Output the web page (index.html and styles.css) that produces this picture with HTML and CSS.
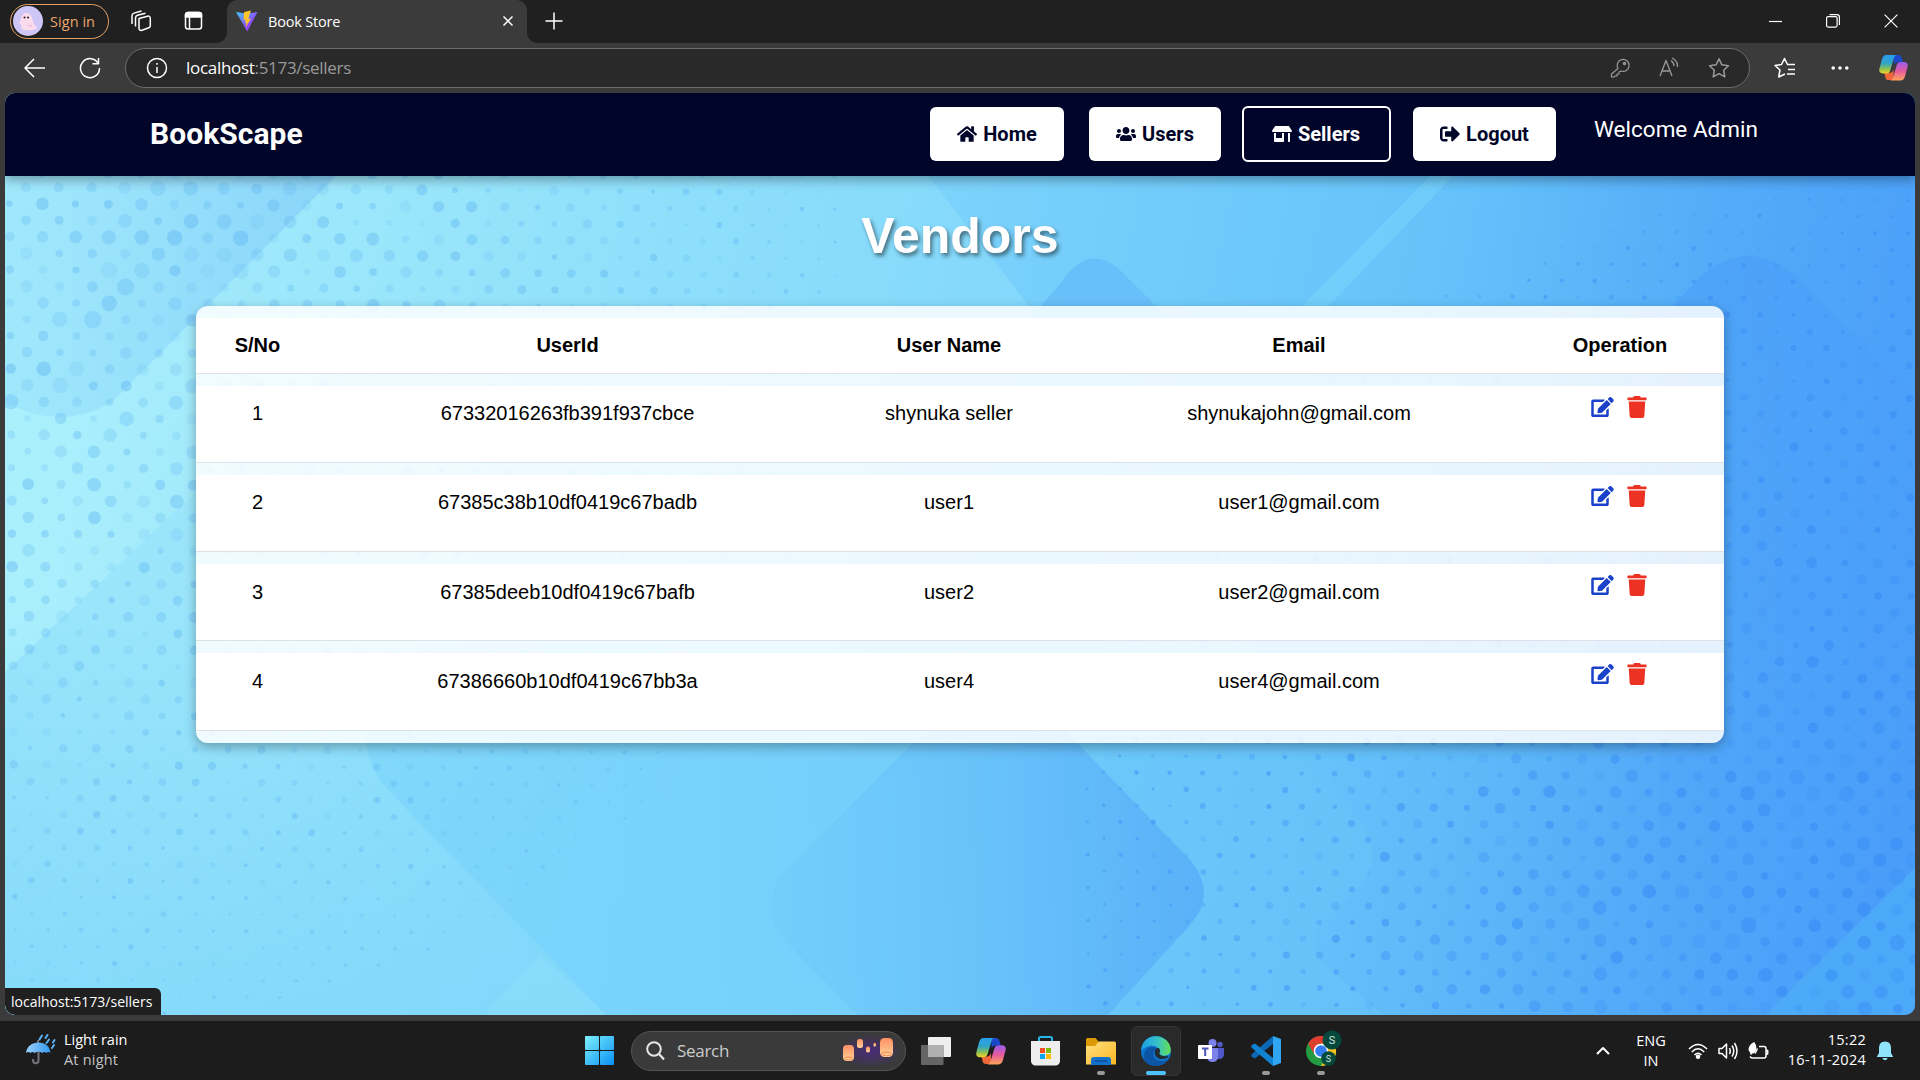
FILE: index.html
```html
<!DOCTYPE html>
<html lang="en">
<head>
<meta charset="utf-8">
<title>Book Store</title>
<link rel="stylesheet" href="styles.css">
</head>
<body>
<svg class="defs" width="0" height="0" aria-hidden="true">
  <defs>
    <linearGradient id="cpA" x1="0" y1="0" x2="0" y2="1"><stop offset="0" stop-color="#2b9df0"/><stop offset=".45" stop-color="#2fa5c8"/><stop offset=".75" stop-color="#8cc152"/><stop offset="1" stop-color="#f5d327"/></linearGradient>
    <linearGradient id="cpB" x1="0" y1="0" x2="0" y2="1"><stop offset="0" stop-color="#9a5cf0"/><stop offset=".5" stop-color="#e65a9c"/><stop offset="1" stop-color="#ffa45c"/></linearGradient>
    <linearGradient id="edA" x1="0" y1="0" x2="1" y2="0"><stop offset="0" stop-color="#1b9de2"/><stop offset=".55" stop-color="#35c1c9"/><stop offset="1" stop-color="#66e04f"/></linearGradient>
    <linearGradient id="fold" x1="0" y1="0" x2="1" y2="1"><stop offset="0" stop-color="#ffe082"/><stop offset="1" stop-color="#fbb820"/></linearGradient>
    <linearGradient id="win" gradientUnits="userSpaceOnUse" x1="0" y1="0" x2="29" y2="29"><stop offset="0" stop-color="#7df0fd"/><stop offset="1" stop-color="#0a90f4"/></linearGradient>
    <linearGradient id="lamp" x1="0" y1="0" x2="0" y2="1"><stop offset="0" stop-color="#ff9063"/><stop offset="1" stop-color="#ffd49a"/></linearGradient>
    <radialGradient id="glow"><stop offset="0" stop-color="#4a2c7c"/><stop offset="1" stop-color="#4a2c7c" stop-opacity="0"/></radialGradient>
    <linearGradient id="vite" x1="0" y1="0" x2="1" y2="1"><stop offset="0" stop-color="#41d1ff"/><stop offset=".6" stop-color="#8a4dfb"/><stop offset="1" stop-color="#bd34fe"/></linearGradient>
    <linearGradient id="umb" x1="0" y1="0" x2="1" y2="0"><stop offset="0" stop-color="#9bd1fb"/><stop offset="1" stop-color="#3397ee"/></linearGradient>
    <symbol id="copilot" viewBox="0 0 30 28">
      <path d="M15 1h5c2 0 3 1.200 3.500 3l1.200 4.500h-5c-2 0-3.300 1-4 3z" fill="#1c49c9"/>
      <path d="M15 27h-5c-2 0-3-1-3.500-3l-1-4.500h5.500c2 0 3-1 4-3.500z" fill="#f0673a"/>
      <path d="M7.500 1H19c-2 0-3 1.200-3.600 3.400l-3.700 12.400c-.7 2.300-2 3.400-4.200 3.400H4c-3.200 0-4.400-2.200-3.500-5.400l2.700-10C4 2.300 5.400 1 7.500 1z" fill="url(#cpA)"/>
      <path d="M22.500 27.400H11c2 0 3-1.200 3.600-3.400l3.700-12.400c.7-2.300 2-3.400 4.200-3.400H26c3.200 0 4.400 2.200 3.500 5.400l-2.700 10c-.8 2.500-2.200 3.800-4.300 3.800z" fill="url(#cpB)"/>
    </symbol>
    <symbol id="edit" viewBox="0 0 576 512"><path d="M402.600 83.200l90.200 90.200c3.800 3.800 3.800 10 0 13.800L274.400 405.600l-92.800 10.300c-12.400 1.400-22.900-9.100-21.500-21.500l10.300-92.800L388.800 83.200c3.800-3.800 10-3.800 13.800 0zm162-22.900l-48.800-48.800c-15.200-15.200-39.900-15.200-55.200 0l-35.400 35.400c-3.800 3.800-3.800 10 0 13.800l90.200 90.200c3.800 3.800 10 3.800 13.800 0l35.400-35.400c15.200-15.300 15.200-40 0-55.200zM384 346.200V448H64V128h229.800c3.200 0 6.200-1.300 8.500-3.500l40-40c7.600-7.600 2.200-20.500-8.500-20.500H48C21.500 64 0 85.500 0 112v352c0 26.500 21.500 48 48 48h352c26.500 0 48-21.500 48-48V306.200c0-10.700-12.900-16-20.500-8.500l-40 40c-2.200 2.300-3.500 5.300-3.500 8.500z"/></symbol>
    <symbol id="trash" viewBox="0 0 448 512"><path d="M432 32H312l-9.400-18.700A24 24 0 0 0 281.100 0H166.800a23.720 23.720 0 0 0-21.400 13.300L136 32H16A16 16 0 0 0 0 48v32a16 16 0 0 0 16 16h416a16 16 0 0 0 16-16V48a16 16 0 0 0-16-16zM32 128l21.200 339a48 48 0 0 0 47.900 45h245.800a48 48 0 0 0 47.900-45L416 128z"/></symbol>
  </defs>
</svg>

<header class="tabstrip">
  <div class="signin">
    <svg width="30" height="30" viewBox="0 0 30 30"><circle cx="15" cy="15" r="15" fill="#cdc6f6"/><path d="M8 14c0-4 2-7 5.500-7s5.500 3 6 7c.5 3 2 5.500 5 8-2 2-5 1-6.500 2.500-2 0-3-1-4.500.200-2-1.200-4-.200-4.500-2.200-1.500-1-.5-3-1-4.500-2 .5-2-2 0-4z" fill="#fbdcee"/><circle cx="11.500" cy="11.500" r="1" fill="#222"/><circle cx="15" cy="11.500" r="1" fill="#222"/><path d="M15 20c2-1 3-1 4 1" stroke="#f2a9cf" fill="none"/></svg>
    <span>Sign in</span>
  </div>
  <svg class="ic workspaces" width="22" height="22" viewBox="0 0 22 22"><path d="M9 8.500l8.500-2.300c1.500-.4 2.800.5 2.800 2v7.600c0 .9-.5 1.700-1.400 2L12 20.300c-1.600.6-3-.4-3-2z"/><path d="M5.500 16.500V8c0-1.400.7-2.300 2-2.700L15.500 3.200M2 14V5.800c0-1.400.7-2.300 2-2.700L11.500 1"/></svg>
  <svg class="ic tabmenu" width="20" height="20" viewBox="0 0 20 20"><rect x="1.500" y="1.500" width="16" height="16.500" rx="2.500"/><path d="M1.500 6V4a2.500 2.500 0 0 1 2.500-2.500h11A2.500 2.500 0 0 1 17.500 4v2z" fill="#fff"/><path d="M5.500 6v12"/></svg>
  <div class="tab">
    <svg width="22" height="22" viewBox="0 0 22 22"><path d="M0 2l10.500 1.800L21.500 2 11.200 21.500z" fill="url(#vite)"/><path d="M15 .5L8 2 7.500 10l2.200-.5-.7 3.400 1.600-.5-1 5.100L15 8.500l-2.500.5.500-3z" fill="#ffc62b"/></svg>
    <span>Book Store</span>
    <svg class="ic close" width="12" height="12" viewBox="0 0 12 12"><path d="M1.500 1.500l9 9m0-9l-9 9"/></svg>
  </div>
  <svg class="ic plus" width="18" height="18" viewBox="0 0 18 18"><path d="M9 .5v17M.5 9h17"/></svg>
  <div class="winbtns">
    <svg class="ic thin" width="14" height="14" viewBox="0 0 14 14"><path d="M1 7.500h13"/></svg>
    <svg class="ic thin" width="14" height="14" viewBox="0 0 14 14"><rect x=".6" y="2.600" width="10.500" height="10.500" rx="1.500"/><path d="M3.500.6h7.500c1.500 0 2.400 1 2.400 2.400v8"/></svg>
    <svg class="ic thin" width="14" height="14" viewBox="0 0 14 14"><path d="M.6.600l12.800 12.800m0-12.800L.6 13.400"/></svg>
  </div>
</header>

<div class="toolbar">
  <svg class="ic" width="22" height="20" viewBox="0 0 22 20"><path d="M21 10H1.500M10 1L1 10l9 9"/></svg>
  <svg class="ic" width="22" height="22" viewBox="0 0 22 22"><path d="M19.300 6.500A9.500 9.500 0 1 0 20.500 11M19.500 1v5.800h-6"/></svg>
  <div class="address">
    <svg class="ic" width="22" height="22" viewBox="0 0 22 22"><circle cx="11" cy="11" r="9.500"/><path d="M11 10v6M11 6v1.700"/></svg>
    <span class="url"><b>localhost</b>:5173/sellers</span>
    <svg class="ic dim" width="20" height="20" viewBox="0 0 20 20"><path d="M8 10.500A6 6 0 1 1 11 13l-2 1v2H7v2H5l-1 1H1.500v-3z" stroke-width="1.200"/><circle cx="14.500" cy="5.500" r="1"/></svg>
    <svg class="ic dim" width="22" height="22" viewBox="0 0 22 22"><path d="M2 19L8 3.500 14 19M4.200 14h7.700M13 3.500q3 2 3 5.500M14 1q6 3 5.500 9" stroke-width="1.300"/></svg>
    <svg class="ic dim" width="22" height="22" viewBox="0 0 22 22"><path d="M11 1.800l2.900 6 6.500.9-4.700 4.600 1.100 6.500-5.800-3.100-5.800 3.100 1.100-6.500L1.600 8.700l6.500-.9z"/></svg>
  </div>
  <svg class="ic" width="22" height="22" viewBox="0 0 22 22"><path d="M11 17l-6.300 3 1.300-7L1 8.500l6.500-1L10.500 1.500l3 6h7.500M14 12.500h7M13 17h8"/></svg>
  <svg width="18" height="6" viewBox="0 0 18 6"><g fill="#fff"><circle cx="2.200" cy="3" r="1.800"/><circle cx="9" cy="3" r="1.800"/><circle cx="15.800" cy="3" r="1.800"/></g></svg>
  <svg width="29" height="27"><use href="#copilot"/></svg>
</div>

<main class="page">
  <svg class="backdrop" viewBox="5 93 1910 922" width="1910" height="922" aria-hidden="true">
    <defs>
      <linearGradient id="base" gradientUnits="userSpaceOnUse" x1="60" y1="420" x2="1900" y2="800">
        <stop offset="0" stop-color="#aaeffc"/><stop offset=".1" stop-color="#a0e8fb"/><stop offset=".28" stop-color="#8adcfb"/><stop offset=".5" stop-color="#76cffb"/><stop offset=".68" stop-color="#67c4fa"/><stop offset=".84" stop-color="#57b1f8"/><stop offset="1" stop-color="#4a9ffa"/>
      </linearGradient>
      <linearGradient id="low" x1="0" y1="0" x2="0" y2="1"><stop offset="0" stop-color="#80d8fb" stop-opacity="0"/><stop offset="1" stop-color="#80d8fb" stop-opacity=".8"/></linearGradient>
      <linearGradient id="sA" x1="0" y1="0" x2="1" y2="0"><stop offset="0" stop-color="#96e0fb" stop-opacity=".5"/><stop offset="1" stop-color="#85cffa"/></linearGradient>
      <linearGradient id="sB" x1="0" y1="0" x2="1" y2="0"><stop offset="0" stop-color="#84d8fa" stop-opacity=".45"/><stop offset="1" stop-color="#84d8fa" stop-opacity="0"/></linearGradient>
      <linearGradient id="sC" x1="0" y1="0" x2="1" y2="0"><stop offset="0" stop-color="#6fcffb" stop-opacity=".4"/><stop offset="1" stop-color="#6fc8fb" stop-opacity=".6"/></linearGradient>
      <linearGradient id="sD" x1="0" y1="0" x2="1" y2="0"><stop offset="0" stop-color="#70ccfb" stop-opacity=".6"/><stop offset="1" stop-color="#5ab1f8"/></linearGradient>
      <linearGradient id="sH" gradientUnits="userSpaceOnUse" x1="1749" y1="255" x2="1749" y2="900"><stop offset="0" stop-color="#4a9ef8" stop-opacity=".6"/><stop offset=".5" stop-color="#4a9ef8" stop-opacity=".4"/><stop offset="1" stop-color="#4a9ef8" stop-opacity="0"/></linearGradient>
      <linearGradient id="right" x1="0" y1="0" x2="1" y2="0"><stop offset="0" stop-color="#4a9df8" stop-opacity="0"/><stop offset="1" stop-color="#4a9df8" stop-opacity=".45"/></linearGradient>
    </defs>
    <path fill="url(#base)" d="M5 93h1910v922H5z"/>
    <path fill="url(#low)" d="M5 600h1100v415H5z"/>
    <path fill="url(#right)" d="M1500 93h415v922h-415z"/>
    <path fill="url(#sA)" d="M5 93H420L336 176 112 402Q60 432 5 402z"/>
    <path fill="url(#sB)" d="M5 672L196 492 400 300V1015H5z"/>
    <path fill="#9ae8fb" fill-opacity=".35" d="M420 93L336 176 196 316V306H1029L928 176 850 93z"/>
    <path fill="url(#sC)" d="M365 720Q364 765 388 790L606 1015H1108L1078 720z"/>
    <path fill="#99e4fb" fill-opacity=".25" d="M484 1015L539 954 606 1015z"/>
    <path fill="#66bbf9" fill-opacity=".8" d="M1030 318L1060 284Q1090 238 1125 275L1170 320z"/>
    <path fill="#7ad6fb" fill-opacity=".5" d="M1430 176L1298 310H1325L1453 176z"/>
    <path fill="url(#sH)" d="M1660 320L1700 277Q1749 235 1797 277L1915 395V900H1660z"/>
    <path fill="#67c4fa" fill-opacity=".55" d="M1060 720H1262L1345 805Q1390 850 1360 886L1322 922Q1305 945 1325 965L1384 1015H1080z"/>
    <path fill="url(#sD)" d="M930 725L782 875Q760 905 782 938L857 1015H1108L1190 925Q1218 893 1190 860L1060 725z"/>
    <path fill="#4fb0f8" fill-opacity=".6" d="M1915 868L1765 1015H1915z"/>
    <g id="dots"></g>
  </svg>

  <nav class="nav">
    <div class="brand">BookScape</div>
    <a class="btn"><svg viewBox="0 0 576 512"><path d="M280.370 148.260L96 300.110V464a16 16 0 0 0 16 16l112.060-.29a16 16 0 0 0 15.920-16V368a16 16 0 0 1 16-16h64a16 16 0 0 1 16 16v95.640a16 16 0 0 0 16 16.050L464 480a16 16 0 0 0 16-16V300L295.670 148.260a12.190 12.190 0 0 0-15.300 0zM571.600 251.470L488 182.560V44.050a12 12 0 0 0-12-12h-56a12 12 0 0 0-12 12v72.610L318.470 43a48 48 0 0 0-61 0L4.340 251.470a12 12 0 0 0-1.600 16.900l25.500 31A12 12 0 0 0 45.150 301l235.220-193.740a12.190 12.190 0 0 1 15.300 0L530.900 301a12 12 0 0 0 16.900-1.600l25.500-31a12 12 0 0 0-1.700-16.930z"/></svg>Home</a>
    <a class="btn users"><svg viewBox="0 0 640 512"><path d="M96 224c35.300 0 64-28.700 64-64s-28.700-64-64-64-64 28.700-64 64 28.700 64 64 64zm448 0c35.300 0 64-28.700 64-64s-28.700-64-64-64-64 28.700-64 64 28.700 64 64 64zm32 32h-64c-17.600 0-33.500 7.100-45.100 18.600 40.300 22.100 68.900 62 75.100 109.400h66c17.700 0 32-14.300 32-32v-32c0-35.300-28.700-64-64-64zm-256 0c61.900 0 112-50.100 112-112S381.900 32 320 32 208 82.100 208 144s50.100 112 112 112zm76.800 32h-8.300c-20.800 10-43.900 16-68.500 16s-47.600-6-68.500-16h-8.300C179.600 288 128 339.600 128 403.200V432c0 26.500 21.500 48 48 48h288c26.500 0 48-21.500 48-48v-28.800c0-63.600-51.600-115.200-115.200-115.200zm-223.700-13.400C161.500 263.100 145.600 256 128 256H64c-35.300 0-64 28.700-64 64v32c0 17.700 14.300 32 32 32h65.900c6.300-47.400 34.900-87.300 75.200-109.400z"/></svg>Users</a>
    <a class="btn sellers"><svg viewBox="0 0 640 512"><path d="M320 384H128V224H64v256c0 17.700 14.300 32 32 32h256c17.700 0 32-14.300 32-32V224h-64v160zm314.600-241.800l-85.300-128c-6-8.900-16-14.200-26.700-14.200H117.400c-10.700 0-20.700 5.300-26.600 14.200l-85.300 128c-14.200 21.300 1 49.800 26.600 49.800H608c25.500 0 40.700-28.500 26.600-49.800zM512 496c0 8.800 7.200 16 16 16h32c8.800 0 16-7.200 16-16V224h-64v272z"/></svg>Sellers</a>
    <a class="btn logout"><svg viewBox="0 0 512 512"><path d="M497 273L329 441c-15 15-41 4.500-41-17v-96H152c-13.300 0-24-10.700-24-24v-96c0-13.300 10.700-24 24-24h136V88c0-21.400 25.900-32 41-17l168 168c9.300 9.400 9.300 24.600 0 34zM192 436v-40c0-6.600-5.400-12-12-12H96c-17.700 0-32-14.300-32-32V160c0-17.700 14.300-32 32-32h84c6.600 0 12-5.400 12-12V76c0-6.600-5.400-12-12-12H96c-53 0-96 43-96 96v192c0 53 43 96 96 96h84c6.600 0 12-5.400 12-12z"/></svg>Logout</a>
    <div class="welcome">Welcome Admin</div>
  </nav>

  <h1 class="title">Vendors</h1>
  <div class="card">
    <table class="vendors">
      <colgroup><col class="c-no"><col class="c-id"><col class="c-name"><col class="c-mail"><col class="c-op"></colgroup>
      <thead><tr><th>S/No</th><th>UserId</th><th>User Name</th><th>Email</th><th>Operation</th></tr></thead>
      <tbody>
        <tr><td>1</td><td>67332016263fb391f937cbce</td><td>shynuka seller</td><td>shynukajohn@gmail.com</td><td class="ops"><svg class="edit"><use href="#edit"/></svg><svg class="trash"><use href="#trash"/></svg></td></tr>
        <tr><td>2</td><td>67385c38b10df0419c67badb</td><td>user1</td><td>user1@gmail.com</td><td class="ops"><svg class="edit"><use href="#edit"/></svg><svg class="trash"><use href="#trash"/></svg></td></tr>
        <tr><td>3</td><td>67385deeb10df0419c67bafb</td><td>user2</td><td>user2@gmail.com</td><td class="ops"><svg class="edit"><use href="#edit"/></svg><svg class="trash"><use href="#trash"/></svg></td></tr>
        <tr><td>4</td><td>67386660b10df0419c67bb3a</td><td>user4</td><td>user4@gmail.com</td><td class="ops"><svg class="edit"><use href="#edit"/></svg><svg class="trash"><use href="#trash"/></svg></td></tr>
      </tbody>
    </table>
  </div>
  <div class="status">localhost:5173/sellers</div>
</main>

<footer class="taskbar">
  <div class="weather">
    <svg width="30" height="32" viewBox="0 0 30 32"><path d="M12.500 15v11.500a2.700 2.700 0 0 1-5.400 0V25" fill="none" stroke="#6f6f73" stroke-width="2.200"/><path d="M12 6v3" stroke="#888" stroke-width="1.500"/><path d="M0 19C1 12 6 8.500 12.500 8.500S24 12 24.500 19q-2-1.800-4 0-2-1.800-4 0-4-2.500-8 0-2-1.800-4 0-2-1.800-4.500 0z" fill="url(#umb)"/><path d="M13.500 5.500l2.500-4M19.500 4l2-3M20.500 9l2.500-3.500M27 8.500l1.500-2.500M26 14l2-3" stroke="#58b2f5" stroke-width="2" stroke-linecap="round"/></svg>
    <div><div class="w1">Light rain</div><div class="w2">At night</div></div>
  </div>
  <div class="apps">
    <svg class="start" width="29" height="29" viewBox="0 0 29 29"><g fill="url(#win)"><rect width="14" height="14" rx="1"/><rect x="15" width="14" height="14" rx="1"/><rect y="15" width="14" height="14" rx="1"/><rect x="15" y="15" width="14" height="14" rx="1"/></g></svg>
    <div class="search">
      <svg width="19" height="20" viewBox="0 0 19 20"><circle cx="8" cy="8" r="6.800" fill="none" stroke="#e6e6e6" stroke-width="2"/><path d="M13 13l5 5.500" stroke="#e6e6e6" stroke-width="2.200"/></svg>
      <span>Search</span>
      <svg width="68" height="38" viewBox="0 0 68 38"><ellipse cx="36" cy="19" rx="32" ry="17" fill="url(#glow)"/><g fill="url(#lamp)"><rect x="9" y="13" width="11" height="16" rx="4"/><rect x="23" y="7" width="6" height="9" rx="2.500"/><rect x="32" y="14.500" width="4" height="6" rx="1.800"/><rect x="39.500" y="11" width="2.500" height="3.500" rx="1"/><rect x="46" y="6" width="13" height="19" rx="4.500"/></g><g fill="none" stroke="#f58a50"><ellipse cx="14.500" cy="26.500" rx="4" ry="1.500"/><ellipse cx="52.500" cy="22" rx="5" ry="1.800"/></g></svg>
    </div>
    <div class="cell"><svg width="30" height="28" viewBox="0 0 30 28"><rect x="7" width="23" height="20" rx="1" fill="#eee"/><rect y="8" width="22.500" height="20" rx="1" fill="#656565"/><path d="M7 8h15.500v12H7z" fill="#b0b0b0"/></svg></div>
    <div class="cell"><svg width="30" height="28"><use href="#copilot"/></svg></div>
    <div class="cell store"><svg width="29" height="30" viewBox="0 0 29 30"><path d="M8 6V2.500Q8 1 9.500 1h10Q21 1 21 2.500V6" fill="none" stroke="#28b5ea" stroke-width="2"/><path d="M0 5h29v20a4.500 4.500 0 0 1-4.500 4.500h-20A4.500 4.500 0 0 1 0 25z" fill="#eeeeee"/><path d="M9 12h5v5H9z" fill="#f25022"/><path d="M15 12h5v5h-5z" fill="#7fba00"/><path d="M9 18h5v5H9z" fill="#00a4ef"/><path d="M15 18h5v5h-5z" fill="#ffb900"/></svg></div>
    <div class="cell open"><svg width="30" height="28" viewBox="0 0 30 28"><path d="M0 2.500A1.500 1.500 0 0 1 1.500 1h8l3.500 4v5H0z" fill="#dc9a09"/><path d="M0 9h9l4-4.500h15.500A1.500 1.500 0 0 1 30 6v21.500H0z" fill="url(#fold)"/><path d="M5 28v-5q0-3 3-3h14q3 0 3 3v5z" fill="#1272ca"/><path d="M9 24h12" stroke="#0a4f9e" stroke-width="1.500"/></svg></div>
    <div class="cell active"><svg width="30" height="30" viewBox="0 0 30 30"><circle cx="15" cy="15" r="15" fill="#0f75cf"/><path d="M3 24C1 9 14 9 18 14c-3-1-6 1-5.500 5 .5 6 9 8 15 4C22 31 9 33 3 24z" fill="#0c55a5"/><path d="M0 14C2-1 17-3 25 4c5 4 6 12 3 14-3 3-12 2-10-1 2-4-4-9-10-7-4 1-6 3-8 4z" fill="url(#edA)"/><path d="M18 12q2 3 .300 5.200 1.500 3.800 8 2.800l1.500.5q-3 3-8 2.500c-6-.6-7.500-7-4.500-10.500z" fill="#222b30"/></svg></div>
    <div class="cell"><svg width="26" height="26" viewBox="0 0 26 26"><circle cx="14.500" cy="5" r="4" fill="#7b83eb"/><circle cx="22" cy="6.500" r="2.700" fill="#5059c9"/><path d="M18 10h8v6q0 5-5 5h-3z" fill="#5059c9"/><path d="M9 10h11v8q0 6-5.500 6T9 18z" fill="#7b83eb"/><rect y="7" width="14" height="14" rx="1" fill="#fff"/><path d="M4 10.500h6.500M7.200 10.500V18" stroke="#4b53bc" stroke-width="2"/></svg></div>
    <div class="cell open"><svg width="30" height="30" viewBox="0 0 30 30"><path d="M22 0l8 3v24l-8 3z" fill="#30a6f3"/><path d="M22 0v8L4 22.500 1 21q-1.500-1.500 0-3z" fill="#0a68b4"/><path d="M22 30v-8L4 7.500 1 9q-1.500 1.500 0 3z" fill="#1283d2"/></svg></div>
    <div class="cell open chrome"><svg width="36" height="36" viewBox="0 0 36 36"><circle cx="15" cy="21" r="15" fill="#249a42"/><path d="M2 13.500A15 15 0 0 1 28 13.500H15z" fill="#e33b2e"/><path d="M28 13.500A15 15 0 0 1 15 36l6.500-11-6.500-11.500z" fill="#fcc31e"/><path d="M2 13.500l6.500 11L15 13.500z" fill="#e33b2e"/><circle cx="15" cy="21" r="7.300" fill="#fff"/><circle cx="15" cy="21" r="5.800" fill="#327df0"/><circle cx="26" cy="10" r="9.500" fill="#05483c"/><circle cx="22.500" cy="28.500" r="7.300" fill="#05483c"/><text x="26" y="14" class="badge-lg">S</text><text x="22.500" y="31.500" class="badge-sm">S</text></svg></div>
  </div>
  <div class="tray">
    <svg class="ic chev" width="14" height="10" viewBox="0 0 14 10"><path d="M1 8l6-6 6 6" stroke-width="2"/></svg>
    <div class="lang">ENG<br>IN</div>
    <svg class="ic" width="20" height="16" viewBox="0 0 20 16"><path d="M1 6q9-9 18 0M3.800 9q6.200-6.400 12.400 0M6.500 12q3.500-3.500 7 0"/><circle cx="10" cy="13.700" r="1.500" fill="#fff"/></svg>
    <svg class="ic" width="20" height="18" viewBox="0 0 20 18"><path d="M1 6.500h3L8.500 2v14L4 11.500H1zM11.500 6q1.500 3 0 6M14 3.500q3.500 5.500 0 11M16.500 1q5 8 0 16"/></svg>
    <svg class="ic" width="21" height="18" viewBox="0 0 21 18"><path d="M11 4.500h5q2 0 2 2V14q0 2-2 2H5q-2 0-3-1.500M18.500 8.500h1.200v3.500h-1.200"/><path d="M1.300 8Q1 3.500 6 .8q3 4.500.5 9-2 1.700-3.500.7zM2.500 12.500l3.500-6" fill="#fff"/><path d="M7 11.500l2.500-5"/></svg>
    <div class="clock">15:22<br>16-11-2024</div>
    <svg width="16" height="20" viewBox="0 0 16 20"><path d="M8 .5c4 0 6 2.800 6 6.500v5l2 3.500v.5H0v-.5L2 12V7C2 3.300 4 .5 8 .5zM5.300 17h5.400q-1 2.300-2.700 2.300T5.300 17z" fill="#8fe3fa"/></svg>
  </div>
</footer>
<script src="dots.js"></script>
</body>
</html>
```
FILE: styles.css
```css
* { box-sizing: border-box; }
body {
  margin: 0;
  width: 1920px;
  height: 1080px;
  overflow: hidden;
  background: #3b3b3b;
  font-family: "Open Sans", "Noto Sans", sans-serif;
  font-size: 14.5px;
  color: #fff;
  display: flex;
  flex-direction: column;
}
svg { display: block; flex: none; }
.defs { position: absolute; }
.ic { fill: none; stroke: #fff; stroke-width: 1.5; stroke-linejoin: round; }
.dim { stroke: #9a9a9a; }
.thin { stroke-width: 1.2; }

/* Browser tab strip */
.tabstrip { height: 43px; flex: none; background: #202020; display: flex; align-items: center; padding: 0 0 1px 10px; }
.signin { width: 99px; height: 35px; border: 1.5px solid #e5a267; border-radius: 20px; display: flex; align-items: center; padding-left: 2px; gap: 7px; color: #eaa66c; margin-right: 21px; }
.signin span { letter-spacing: .05px; }
.workspaces { margin-right: 32px; }
.tabmenu { margin-right: 23px; }
.tab { position: relative; width: 300px; height: 43px; margin-bottom: -1px; background: #3b3b3b; border-radius: 10px 10px 0 0; display: flex; align-items: center; padding: 0 13px 1px 9px; gap: 10px; }
.tab::before, .tab::after { content: ""; position: absolute; bottom: 0; width: 10px; height: 10px; }
.tab::before { left: -10px; background: radial-gradient(circle at 0 0, transparent 9.5px, #3b3b3b 10px); }
.tab::after { right: -10px; background: radial-gradient(circle at 100% 0, transparent 9.5px, #3b3b3b 10px); }
.tab span { flex: 1; letter-spacing: -.2px; }
.plus { margin-left: 18px; }
.winbtns { margin-left: auto; display: flex; gap: 44px; padding-right: 22px; }

/* Browser toolbar */
.toolbar { height: 50px; flex: none; display: flex; align-items: center; padding: 0 12px 1px 24px; }
.toolbar > svg:nth-child(1) { margin-right: 33px; }
.toolbar > svg:nth-child(2) { margin-right: 24px; }
.address { width: 1625px; height: 40px; border: 1px solid #6b6b6b; border-radius: 20px; background: #292929; display: flex; align-items: center; padding: 0 19px 0 20px; margin-right: 24px; }
.url { flex: 1; margin-left: 18px; font-size: 17px; letter-spacing: -.3px; color: #9a9a9a; }
.url b { font-weight: 400; color: #fff; }
.address .dim { margin-left: 28px; }
.toolbar > svg:nth-child(4) { margin-right: 35px; }
.toolbar > svg:nth-child(5) { margin-right: auto; }

/* Page viewport */
.page { position: relative; isolation: isolate; width: 1910px; height: 922px; flex: none; margin-left: 5px; border-radius: 10px; overflow: hidden; }
.backdrop { position: absolute; inset: 0; z-index: -1; }
.nav { height: 83px; background: #000529; box-shadow: 0 4px 10px rgba(0, 0, 0, .32); display: flex; align-items: center; padding: 0 0 1px 145px; font-family: Roboto, sans-serif; }
.brand { width: 780px; font-size: 30px; font-weight: 700; letter-spacing: .05px; padding-bottom: 1px; }
.btn { height: 54px; border-radius: 6px; background: #fff; color: #000529; fill: #000529; font-size: 20px; font-weight: 700; display: flex; align-items: center; justify-content: center; gap: 6px; width: 134px; margin-right: 25px; }
.btn svg { width: 20px; height: 20px; }
.btn.users { width: 132px; margin-right: 21px; }
.btn.sellers { width: 149px; height: 56px; background: none; border: 2px solid #fff; color: #fff; fill: #fff; margin-right: 22px; padding-right: 1px; }
.btn.logout { width: 143px; margin-right: 38px; }
.welcome { font-size: 22.5px; padding-bottom: 11px; }

.title { margin: 32px 0 0; text-align: center; font: 700 50px/56px "Liberation Sans", Arial, sans-serif; text-shadow: 2px 3px 4px rgba(0, 0, 0, .5); }
.card { width: 1528px; height: 437px; margin: 42px auto 0; border-radius: 12px; overflow: hidden; background: rgba(255, 255, 255, .85); box-shadow: 0 4px 12px rgba(0, 0, 0, .3); }
.vendors { width: 1528px; table-layout: fixed; border-collapse: separate; border-spacing: 0 12px; font: 20px/30px "Liberation Sans", Arial, sans-serif; color: #000; text-align: center; }
.c-no { width: 123px; }
.c-id { width: 497px; }
.c-name { width: 266px; }
.c-mail { width: 434px; }
.c-op { width: 208px; }
.vendors th, .vendors td { background: #fff; border-bottom: 1px solid #dee2e6; padding: 0; }
.vendors th { height: 56px; padding-bottom: 2px; }
.vendors td { height: 77px; padding-top: 12px; vertical-align: top; }
.vendors tr:nth-child(n+3) td { padding-top: 13px; }
.vendors tr:last-child td { height: 78px; }
.vendors tr td.ops { padding: 10px 2px 0 0; }
.ops svg { display: inline-block; vertical-align: top; }
.edit { width: 23px; height: 20px; fill: #1a41c9; margin: 1px 13px 0 0; }
.trash { width: 20px; height: 22px; fill: #ec3323; }

.status { position: absolute; left: 0; bottom: 0; width: 156px; height: 27px; background: #202020; border-radius: 0 6px 0 10px; padding-left: 6px; line-height: 27px; font-size: 14px; white-space: nowrap; }

/* Desktop taskbar */
.taskbar { margin-top: 6px; height: 59px; flex: none; background: #1c1c1c; display: flex; align-items: center; }
.weather { width: 585px; padding: 0 0 2px 26px; display: flex; align-items: center; gap: 8px; line-height: 20px; }
.weather .w2 { color: #c4c4c4; letter-spacing: .2px; }
.apps { display: flex; align-items: center; }
.search { width: 275px; height: 40px; margin: 0 5px 0 17px; border-radius: 20px; border: 1px solid #555; background: #3a3a3a; display: flex; align-items: center; padding: 0 3px 0 14px; gap: 12px; font-size: 17px; color: #ccc; letter-spacing: -.3px; }
.search span { flex: 1; }
.cell { width: 50px; height: 50px; margin-right: 5px; position: relative; display: flex; align-items: center; justify-content: center; border-radius: 6px; }
.cell.active { background: #2a2a2a; border: 1px solid #353535; }
.cell.open::after, .cell.active::after { content: ""; position: absolute; bottom: 1px; left: 50%; width: 8px; height: 4px; margin-left: -4px; border-radius: 2px; background: #999; }
.cell.active::after { width: 20px; margin-left: -10px; bottom: 0; background: #4cc2ff; }
.cell.store { padding-right: 1px; }
.chrome svg { margin: -6px -6px 0 0; }
.badge-lg, .badge-sm { fill: #cde5df; text-anchor: middle; font-family: Roboto, sans-serif; font-size: 11px; }
.badge-sm { font-size: 9px; }
.tray { margin-left: auto; display: flex; align-items: center; padding: 0 27px 0 0; gap: 10px; line-height: 20px; }
.lang { width: 40px; text-align: center; margin: 0 7px 0 11px; }
.clock { width: 88px; text-align: right; letter-spacing: .25px; padding-right: 1px; margin-bottom: 2px; }
```
FILE: dots.js
```js
// Halftone dots of the page backdrop: a staggered grid whose dots
// shrink away from the upper-left and lower-right corners.
(function () {
  var group = document.getElementById('dots');
  var seed = 7;
  function rand() {
    seed = (seed * 16807) % 2147483647;
    return seed / 2147483647;
  }
  function field(x, y, cx, cy, sx, sy) {
    var dx = (x - cx) / sx, dy = (y - cy) / sy;
    return Math.max(0, 1 - Math.sqrt(dx * dx + dy * dy));
  }
  for (var r = -1; r < 53; r++) {
    for (var c = -1; c < 59; c++) {
      var x = 25.7 + 33.02 * c - (r % 2 ? 16.5 : 0) + 0.008 * 16.5 * r;
      var y = 187 + 16.5 * r + 0.007 * x;
      var left = field(x, y, 120, 290, 850, 850);
      var right = field(x, y, 1830, 900, 880, 820);
      var f = Math.max(left, right);
      if (f < 0.14) continue;
      var size = 0.8 + 8.4 * f * (0.35 + 0.65 * rand());
      var dot = document.createElementNS('http://www.w3.org/2000/svg', 'circle');
      dot.setAttribute('cx', x.toFixed(1));
      dot.setAttribute('cy', y.toFixed(1));
      dot.setAttribute('r', size.toFixed(1));
      dot.setAttribute('fill', left > right ? '#5fb4f3' : '#2f82f5');
      dot.setAttribute('fill-opacity', (0.12 + 0.3 * rand()).toFixed(2));
      group.appendChild(dot);
    }
  }
})();
```
